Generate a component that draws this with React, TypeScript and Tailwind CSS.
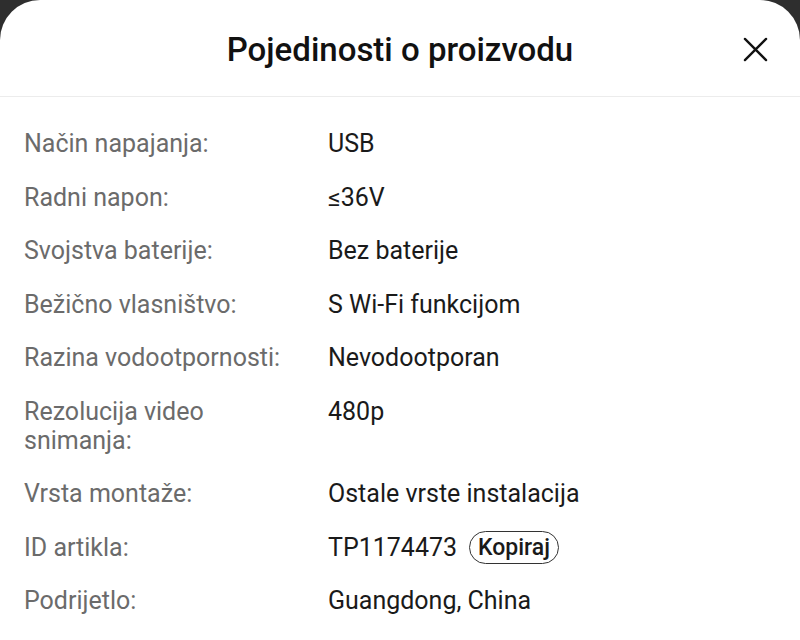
const rows: { label: string; value: string; copy?: boolean }[] = [
  { label: "Način napajanja:", value: "USB" },
  { label: "Radni napon:", value: "≤36V" },
  { label: "Svojstva baterije:", value: "Bez baterije" },
  { label: "Bežično vlasništvo:", value: "S Wi-Fi funkcijom" },
  { label: "Razina vodootpornosti:", value: "Nevodootporan" },
  { label: "Rezolucija video snimanja:", value: "480p" },
  { label: "Vrsta montaže:", value: "Ostale vrste instalacija" },
  { label: "ID artikla:", value: "TP1174473", copy: true },
  { label: "Podrijetlo:", value: "Guangdong, China" },
];

export default function App() {
  return (
    <div className="h-[640px] w-[800px] overflow-hidden bg-[#2e2e2e] font-['Roboto',sans-serif]">
      <div className="h-full rounded-t-[40px] bg-white">
        <header className="relative flex h-[97px] items-center justify-center border-b border-[#ececec] pt-[4px]">
          <h1 className="text-[33px] font-medium text-[#111]">Pojedinosti o proizvodu</h1>
          <button className="absolute right-[32px] top-[37px] text-[#111]">
            <svg width="25" height="25" viewBox="0 0 26 26" fill="none" stroke="currentColor" strokeWidth="2.4" strokeLinecap="round">
              <path d="M2 2L24 24M24 2L2 24" />
            </svg>
          </button>
        </header>
        <dl className="flex flex-col gap-[24.5px] px-[24px] pt-[32px]">
          {rows.map((r) => (
            <div key={r.label} className="flex items-start text-[25px] leading-[29px]">
              <dt className="w-[304px] shrink-0 pr-[24px] text-[#6b6b6b]">{r.label}</dt>
              <dd className="flex h-[29px] items-center gap-[12px] text-[#1a1a1a]">
                {r.value}
                {r.copy && (
                  <span className="-my-[2px] rounded-full border border-[#333] px-[8px] text-[23px] leading-[31px] font-medium">
                    Kopiraj
                  </span>
                )}
              </dd>
            </div>
          ))}
        </dl>
      </div>
    </div>
  );
}
